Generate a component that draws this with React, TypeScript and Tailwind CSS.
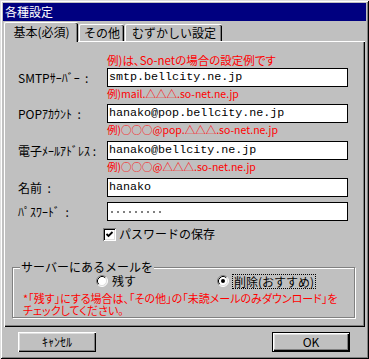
import React from "react";

type FieldProps = {
    label: string;
    children: React.ReactNode;
    hint?: string;
    className?: string;
};

function Field({ label, children, hint, className }: FieldProps) {
    return (
        <div className={className}>
            <div className="flex items-center h-[19px]">
                <div className="w-[89px] text-[12px] leading-[14px] whitespace-pre">{label}</div>
                <div className="w-[241px] h-[19px] border border-black bg-white pl-[1px] flex items-center font-['Liberation_Mono',monospace] text-[11.7px] leading-[17px] whitespace-pre">
                    {children}
                </div>
            </div>
            {hint && (
                <div className="ml-[89px] h-[13px] text-[10.5px] leading-[13px] text-[#ff0000] whitespace-nowrap [font-feature-settings:'palt']">
                    {hint}
                </div>
            )}
        </div>
    );
}

function Radio({ on }: { on?: boolean }) {
    return (
        <svg width="12" height="12" viewBox="0 0 12 12" className="shrink-0">
            <circle cx="6" cy="6" r="5" fill="#fff" />
            <path d="M2.11 9.89 A5.5 5.5 0 0 1 9.89 2.11" stroke="#808080" fill="none" />
            <path d="M2.82 9.18 A4.5 4.5 0 0 1 9.18 2.82" stroke="#000" fill="none" />
            <path d="M9.89 2.11 A5.5 5.5 0 0 1 2.11 9.89" stroke="#fff" fill="none" />
            <path d="M9.18 2.82 A4.5 4.5 0 0 1 2.82 9.18" stroke="#dfdfdf" fill="none" />
            {on && <circle cx="6" cy="6" r="2" fill="#000" />}
        </svg>
    );
}

function Tab({ selected, className, children }: { selected?: boolean; className: string; children: React.ReactNode }) {
    return (
        <div
            className={
                className +
                (selected
                    ? " h-[20px] -mb-[1px] pb-[2px] relative z-10"
                    : " h-[17px]") +
                " bg-[#c0c0c0] border-l border-t border-white rounded-tl-[2px] rounded-tr-[2px] flex items-center justify-center text-[12px] leading-[14px] whitespace-nowrap shadow-[inset_-1px_0_#000,inset_-2px_0_#808080]"
            }
        >
            {children}
        </div>
    );
}

function Button({ isDefault, children }: { isDefault?: boolean; children: React.ReactNode }) {
    return (
        <div className={"w-[78px] h-[20px] " + (isDefault ? "border border-black" : "")}>
            <div className="w-full h-full flex items-center justify-center text-[12px] leading-[14px] shadow-[inset_1px_1px_#fff,inset_-1px_-1px_#000,inset_-2px_-2px_#808080,inset_2px_2px_#dfdfdf]">
                {children}
            </div>
        </div>
    );
}

export default function App() {
    return (
        <div className="w-[369px] h-[359px] bg-[#c0c0c0] p-[3px] flex flex-col text-black font-['Noto_Sans_CJK_JP',sans-serif] shadow-[inset_1px_1px_#dfdfdf,inset_-1px_-1px_#000,inset_2px_2px_#fff,inset_-2px_-2px_#808080]">
            {/* title bar */}
            <div className="h-[18px] bg-[#000080] text-white text-[12px] leading-[18px] pl-[2px]">各種設定</div>

            {/* tabs */}
            <div className="mt-[1px] h-[19px] flex items-end pl-[1px]">
                <Tab selected className="w-[74px]">基本(必須)</Tab>
                <Tab className="w-[45px] ml-[1px]">その他</Tab>
                <Tab className="w-[97px] ml-[1px]">むずかしい設定</Tab>
            </div>

            {/* panel */}
            <div className="mx-[1px] h-[286px] pt-[12px] shadow-[inset_1px_1px_#fff,inset_-1px_-1px_#000,inset_-2px_-2px_#808080]">
                <div className="pl-[14px]">
                    <div className="ml-[89px] h-[14px] text-[11.5px] leading-[14px] text-[#ff0000] whitespace-nowrap [font-feature-settings:'palt']">
                        例)は、So-netの場合の設定例です
                    </div>
                    <Field className="mt-[1px]" label={"SMTPｻｰﾊﾞｰ\u00a0\u00a0:"} hint="例)mail.△△△.so-net.ne.jp">
                        smtp.bellcity.ne.jp
                    </Field>
                    <Field className="mt-[4px]" label={"POPｱｶｳﾝﾄ\u00a0\u00a0:"} hint="例)○○○@pop.△△△.so-net.ne.jp">
                        hanako@pop.bellcity.ne.jp
                    </Field>
                    <Field className="mt-[5px]" label={"電子ﾒｰﾙｱﾄﾞﾚｽ\u00a0:"} hint="例)○○○@△△△.so-net.ne.jp">
                        hanako@bellcity.ne.jp
                    </Field>
                    <Field className="mt-[5px]" label={"名前\u00a0\u00a0:"}>
                        hanako
                    </Field>
                    <Field className="mt-[5px]" label={"ﾊﾟｽﾜｰﾄﾞ\u00a0\u00a0:"}>
                        <div className="flex gap-[4px] pl-[2px]">
                            {[0, 1, 2, 3, 4, 5, 6, 7, 8].map((i) => (
                                <span key={i} className="w-[2px] h-[2px] bg-[#808080]" />
                            ))}
                        </div>
                    </Field>

                    {/* save password */}
                    <div className="mt-[6px] ml-[85px] flex items-center h-[14px]">
                        <div className="w-[13px] h-[13px] bg-white flex items-center justify-center shadow-[inset_1px_1px_#808080,inset_-1px_-1px_#fff,inset_2px_2px_#000,inset_-2px_-2px_#dfdfdf]">
                            <svg width="9" height="9" viewBox="0 0 9 9">
                                <path d="M1.5 4 L3.5 6 L7.5 2" stroke="#000" strokeWidth="1.8" fill="none" />
                            </svg>
                        </div>
                        <span className="ml-[3px] text-[12px] leading-[14px]">パスワードの保存</span>
                    </div>
                </div>

                {/* group box */}
                <div className="relative mt-[26px] ml-[8px] w-[343px] border border-[#808080] shadow-[inset_1px_1px_#fff,1px_1px_#fff]">
                    <span className="absolute -top-[7px] left-[7px] px-[1px] bg-[#c0c0c0] text-[12px] leading-[12px]">
                        サーバーにあるメールを
                    </span>
                    <div className="pt-[6px] pl-[83px] h-[20px] flex items-end">
                        <div className="w-[121px] h-[14px] flex items-center">
                            <Radio />
                            <span className="ml-[4px] text-[12px] leading-[12px]">残す</span>
                        </div>
                        <div className="h-[14px] flex items-center">
                            <Radio on />
                            <span className="ml-[3px] px-[1px] border border-dotted border-black text-[12px] leading-[13px]">
                                削除(おすすめ)
                            </span>
                        </div>
                    </div>
                    <div className="mt-[4px] pl-[10px] pb-[1px] text-[11px] leading-[12px] text-[#ff0000] whitespace-nowrap [font-feature-settings:'palt']">
                        *「残す」にする場合は、「その他」の「未読メールのみダウンロード」を
                        <br />
                        チェックしてください。
                    </div>
                </div>
            </div>

            {/* buttons */}
            <div className="mt-[5px] flex justify-between pl-[15px] pr-[16px]">
                <Button>ｷｬﾝｾﾙ</Button>
                <Button isDefault>OK</Button>
            </div>
        </div>
    );
}
